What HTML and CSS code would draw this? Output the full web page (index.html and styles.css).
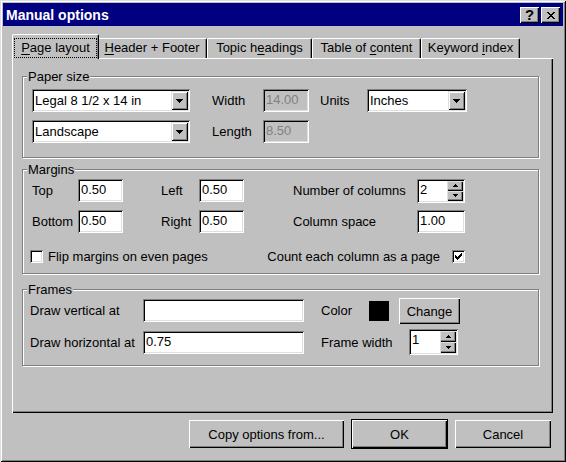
FILE: index.html
```html
<!DOCTYPE html>
<html>
<head>
<meta charset="utf-8">
<title>Manual options</title>
<link rel="stylesheet" href="styles.css">
</head>
<body>
<div class="window">
  <div class="titlebar">
    <span class="title">Manual options</span>
    <span class="tbtn help">?</span>
    <span class="tbtn close"><svg width="8" height="7" viewBox="0 0 8 7" shape-rendering="crispEdges"><path d="M0 0h2v1H0z M6 0h2v1H6z M1 1h2v1H1z M5 1h2v1H5z M2 2h4v1H2z M3 3h2v1H3z M2 4h4v1H2z M1 5h2v1H1z M5 5h2v1H5z M0 6h2v1H0z M6 6h2v1H6z" fill="#000"/></svg></span>
  </div>
  <div class="client">
    <div class="tabs">
      <div class="tab tab-1 active"><span class="focus"><u>P</u>age layout</span></div>
      <div class="tab tab-2"><u>H</u>eader + Footer</div>
      <div class="tab tab-3">Topic h<u>e</u>adings</div>
      <div class="tab tab-4">Table of <u>c</u>ontent</div>
      <div class="tab tab-5">Keyword <u>i</u>ndex</div>
    </div>
    <div class="panel">
      <div class="group paper">
        <span class="glabel">Paper size</span>
        <div class="grid paper-grid">
          <div class="combo w158"><span class="val">Legal 8 1/2 x 14 in</span><span class="drop"><svg width="7" height="4" viewBox="0 0 7 4" shape-rendering="crispEdges"><path d="M0 0h7v1H0z M1 1h5v1H1z M2 2h3v1H2z M3 3h1v1H3z" fill="#000"/></svg></span></div>
          <span class="lbl">Width</span>
          <div class="field disabled w46">14.00</div>
          <span class="lbl">Units</span>
          <div class="combo w100"><span class="val">Inches</span><span class="drop"><svg width="7" height="4" viewBox="0 0 7 4" shape-rendering="crispEdges"><path d="M0 0h7v1H0z M1 1h5v1H1z M2 2h3v1H2z M3 3h1v1H3z" fill="#000"/></svg></span></div>
          <div class="combo w158"><span class="val">Landscape</span><span class="drop"><svg width="7" height="4" viewBox="0 0 7 4" shape-rendering="crispEdges"><path d="M0 0h7v1H0z M1 1h5v1H1z M2 2h3v1H2z M3 3h1v1H3z" fill="#000"/></svg></span></div>
          <span class="lbl">Length</span>
          <div class="field disabled w46">8.50</div>
        </div>
      </div>

      <div class="group margins">
        <span class="glabel">Margins</span>
        <div class="grid margins-grid">
          <span class="lbl">Top</span>
          <div class="field w45">0.50</div>
          <span class="lbl">Left</span>
          <div class="field w45">0.50</div>
          <span class="lbl">Number of columns</span>
          <div class="spin w48 h24"><span class="val">2</span><span class="spinbtns"><span class="sbtn"><svg width="5" height="3" viewBox="0 0 5 3" shape-rendering="crispEdges"><path d="M2 0h1v1H2z M1 1h3v1H1z M0 2h5v1H0z" fill="#000"/></svg></span><span class="sbtn"><svg width="5" height="3" viewBox="0 0 5 3" shape-rendering="crispEdges"><path d="M0 0h5v1H0z M1 1h3v1H1z M2 2h1v1H2z" fill="#000"/></svg></span></span></div>
          <span class="lbl">Bottom</span>
          <div class="field w45">0.50</div>
          <span class="lbl">Right</span>
          <div class="field w45">0.50</div>
          <span class="lbl">Column space</span>
          <div class="field w48">1.00</div>
        </div>
        <div class="checkrow">
          <span class="check"></span>
          <span class="cblabel">Flip margins on even pages</span>
          <span class="cblabel count">Count each column as a page</span>
          <span class="check checked"><svg width="13" height="13" viewBox="0 0 13 13" shape-rendering="crispEdges"><path d="M3 5h1v3H3z M4 6h1v3H4z M5 7h1v3H5z M6 6h1v3H6z M7 5h1v3H7z M8 4h1v3H8z M9 3h1v3H9z" fill="#000"/></svg></span>
        </div>
      </div>

      <div class="group frames">
        <span class="glabel">Frames</span>
        <div class="grid frames-grid">
          <span class="lbl">Draw vertical at</span>
          <div class="field w161"></div>
          <span class="lbl">Color</span>
          <span class="swatch"></span>
          <span class="button change">Change</span>
          <span class="lbl">Draw horizontal at</span>
          <div class="field w161">0.75</div>
          <span class="lbl fw">Frame width</span>
          <div class="spin w49 h26"><span class="val">1</span><span class="spinbtns"><span class="sbtn"><svg width="5" height="3" viewBox="0 0 5 3" shape-rendering="crispEdges"><path d="M2 0h1v1H2z M1 1h3v1H1z M0 2h5v1H0z" fill="#000"/></svg></span><span class="sbtn"><svg width="5" height="3" viewBox="0 0 5 3" shape-rendering="crispEdges"><path d="M0 0h5v1H0z M1 1h3v1H1z M2 2h1v1H2z" fill="#000"/></svg></span></span></div>
        </div>
      </div>
    </div>
    <div class="buttons">
      <span class="button copy">Copy options from...</span>
      <span class="button ok">OK</span>
      <span class="button cancel">Cancel</span>
    </div>
  </div>
</div>
</body>
</html>
```
FILE: styles.css
```css
* { box-sizing: border-box; }
html, body { margin: 0; padding: 0; }
body {
  font-family: "Liberation Sans", Arial, sans-serif;
  font-size: 13px;
  line-height: 15px;
  color: #000;
  background: #c0c0c0;
}
u { text-decoration: underline; text-underline-offset: 2px; }

.window {
  width: 566px;
  height: 462px;
  padding: 3px;
  background: #c0c0c0;
  display: flex;
  flex-direction: column;
  box-shadow: inset 1px 1px 0 #dfdfdf, inset -1px -1px 0 #000, inset 2px 2px 0 #fff, inset -2px -2px 0 #808080;
}

.titlebar {
  height: 23px;
  flex: none;
  background: #000080;
  color: #fff;
  display: flex;
  align-items: center;
  padding: 1px 3px 0 3px;
}
.title { flex: 1; font-weight: bold; font-size: 14px; }
.tbtn {
  width: 19px;
  height: 16px;
  background: #c0c0c0;
  color: #000;
  display: flex;
  align-items: center;
  justify-content: center;
  box-shadow: inset 1px 1px 0 #fff, inset -1px -1px 0 #000, inset -2px -2px 0 #808080;
}
.help { font-weight: bold; font-size: 15px; line-height: 14px; }
.close { margin-left: 2px; }

.client {
  flex: 1;
  padding: 8px 10px 0 9px;
  display: flex;
  flex-direction: column;
}

.tabs {
  height: 24px;
  flex: none;
  display: flex;
  align-items: flex-end;
  padding-left: 2px;
}
.tab {
  height: 20px;
  padding-top: 1px;
  text-align: center;
  white-space: nowrap;
  border-top: 1px solid #fff;
  border-left: 1px solid #fff;
  border-right: 1px solid #000;
  border-radius: 2px 2px 0 0;
  box-shadow: inset -1px 0 0 #808080;
}
.tab-1 { width: 83px; }
.tab-2 { width: 110px; }
.tab-3 { width: 105px; }
.tab-4 { width: 109px; }
.tab-5 { width: 99px; }
.tab.active {
  position: relative;
  z-index: 1;
  width: 87px;
  height: 25px;
  margin: 0 -2px -1px;
  padding-top: 3px;
  background: #c0c0c0;
}
.focus {
  display: block;
  margin: 0 1px;
  height: 20px;
  padding-top: 1px;
  border: 1px dotted #000;
}

.panel {
  height: 355px;
  flex: none;
  padding: 18px 0 0 10px;
  box-shadow: inset 1px 1px 0 #fff, inset -1px -1px 0 #000, inset -2px -2px 0 #808080;
}

.group {
  position: relative;
  width: 517px;
  border: 1px solid #808080;
  box-shadow: inset 1px 1px 0 #fff, 1px 1px 0 #fff;
}
.glabel {
  position: absolute;
  top: -8px;
  left: 4px;
  padding: 0 1px;
  background: #c0c0c0;
}
.grid {
  display: grid;
  grid-auto-rows: 23px;
  align-items: center;
  justify-items: start;
}
.lbl { white-space: nowrap; }

.paper { height: 82px; padding: 12px 0 0 9px; }
.paper-grid { grid-template-columns: 180px 51px 57px 47px 100px; row-gap: 8px; }

.margins { height: 105px; margin-top: 11px; padding: 9px 0 0 9px; }
.margins-grid { grid-template-columns: 46px 83px 38px 94px 124px 48px; row-gap: 8px; }

.frames { height: 77px; margin-top: 15px; padding: 9px 0 0 7px; }
.frames-grid { grid-template-columns: 113px 178px 48px 30px 10px 50px; row-gap: 9px; }
.frames-grid .fw { grid-column: 3 / 6; }

.field {
  height: 23px;
  background: #fff;
  padding: 3px 3px 0;
  white-space: nowrap;
  box-shadow: inset 1px 1px 0 #808080, inset -1px -1px 0 #fff, inset 2px 2px 0 #000, inset -2px -2px 0 #dfdfdf;
}
.field.disabled { background: #c0c0c0; color: #808080; }
.w45 { width: 45px; }
.w46 { width: 46px; }
.w48 { width: 48px; }
.w49 { width: 49px; }
.w100 { width: 100px; }
.w158 { width: 158px; }
.w161 { width: 161px; }

.combo {
  height: 23px;
  background: #fff;
  display: flex;
  padding: 2px;
  box-shadow: inset 1px 1px 0 #808080, inset -1px -1px 0 #fff, inset 2px 2px 0 #000, inset -2px -2px 0 #dfdfdf;
}
.combo .val { flex: 1; padding: 2px 0 0 1px; white-space: nowrap; }
.drop {
  width: 17px;
  background: #c0c0c0;
  display: flex;
  align-items: center;
  justify-content: center;
  box-shadow: inset 1px 1px 0 #dfdfdf, inset -1px -1px 0 #000, inset 2px 2px 0 #fff, inset -2px -2px 0 #808080;
}

.spin {
  background: #fff;
  display: flex;
  padding: 2px;
  box-shadow: inset 1px 1px 0 #808080, inset -1px -1px 0 #fff, inset 2px 2px 0 #000, inset -2px -2px 0 #dfdfdf;
}
.h24 { height: 24px; }
.h26 { height: 26px; align-self: start; margin-top: -2px; }
.spin .val { flex: 1; padding: 1px 0 0 1px; }
.spinbtns { width: 16px; display: flex; flex-direction: column; }
.sbtn {
  flex: 1;
  background: #c0c0c0;
  display: flex;
  align-items: center;
  justify-content: center;
  box-shadow: inset 1px 1px 0 #dfdfdf, inset -1px -1px 0 #000, inset -2px -2px 0 #808080;
}

.checkrow {
  display: flex;
  align-items: center;
  margin: 16px 0 0 -2px;
}
.check {
  width: 13px;
  height: 13px;
  flex: none;
  background: #fff;
  box-shadow: inset 1px 1px 0 #808080, inset -1px -1px 0 #fff, inset 2px 2px 0 #000, inset -2px -2px 0 #dfdfdf;
}
.check svg { display: block; }
.cblabel { margin-left: 5px; white-space: nowrap; }
.count { margin-left: auto; }
.checked { margin: 0 73px 0 12px; }

.swatch { width: 20px; height: 20px; background: #000; align-self: start; margin-top: 2px; }

.button {
  height: 28px;
  display: flex;
  align-items: center;
  justify-content: center;
  background: #c0c0c0;
  white-space: nowrap;
  box-shadow: inset 1px 1px 0 #fff, inset -1px -1px 0 #000, inset -2px -2px 0 #808080;
}
.change { width: 61px; height: 26px; align-self: start; margin-top: -1px; grid-column: 5 / 7; }

.buttons {
  display: flex;
  justify-content: flex-end;
  gap: 8px;
  margin-top: 7px;
  padding-right: 2px;
}
.copy { width: 155px; }
.ok { width: 95px; outline: 1px solid #000; }
.cancel { width: 96px; }
```
